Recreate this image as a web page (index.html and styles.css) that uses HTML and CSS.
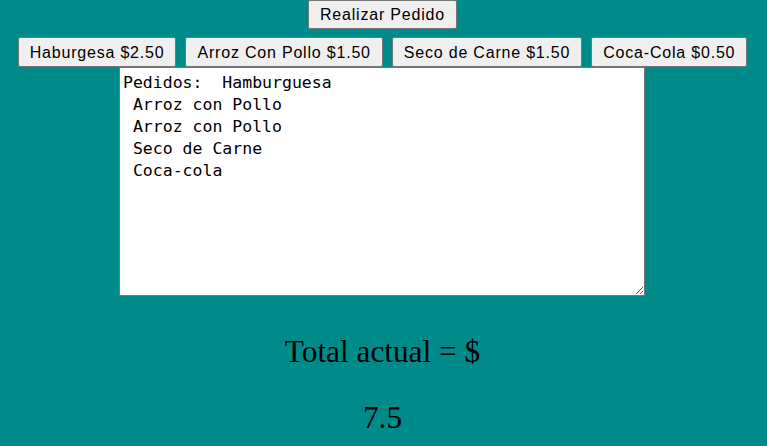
FILE: index.html
```html
<!DOCTYPE html>
<html lang="es">
<head>
<meta charset="utf-8">
<title>Pedidos</title>
<link rel="stylesheet" href="styles.css">
</head>
<body>
<main class="page">
  <div class="row row-top">
    <button class="btn">Realizar Pedido</button>
  </div>
  <div class="row row-menu">
    <button class="btn">Haburgesa $2.50</button>
    <button class="btn">Arroz Con Pollo $1.50</button>
    <button class="btn">Seco de Carne $1.50</button>
    <button class="btn">Coca-Cola $0.50</button>
  </div>
  <textarea class="orders">Pedidos:  Hamburguesa
 Arroz con Pollo
 Arroz con Pollo
 Seco de Carne
 Coca-cola</textarea>
  <p class="total">Total actual = $</p>
  <p class="amount">7.5</p>
</main>
</body>
</html>
```

FILE: styles.css
```css
html, body {
  margin: 0;
  padding: 0;
  background: #008b8b;
}
.page {
  display: flex;
  flex-direction: column;
  align-items: center;
  width: 765px;
}
.row {
  display: flex;
  justify-content: center;
  gap: 8px;
}
.row-top {
  height: 29px;
}
.row-menu {
  margin-top: 8px;
  gap: 9px;
}
.btn {
  font-family: "Liberation Sans", Arial, sans-serif;
  font-size: 16px;
  letter-spacing: 0.8px;
  color: #000;
  background: #efefef;
  border: 1px solid #767676;
  border-radius: 2px;
  padding: 0 11px;
  height: 29px;
  line-height: 27px;
}
.row-menu .btn {
  height: 30px;
}
.orders {
  box-sizing: border-box;
  width: 526px;
  height: 229px;
  margin: 0 1px 0 0;
  padding: 4px 3px;
  border: 1px solid #767676;
  background: #fff;
  font-family: "DejaVu Sans Mono", monospace;
  font-size: 16.5px;
  line-height: 22px;
  color: #000;
}
.total {
  margin: 39px 0 0;
  font-family: "Liberation Serif", "Times New Roman", serif;
  font-size: 31.3px;
  line-height: 34px;
}
.amount {
  margin: 32px 0 0;
  font-family: "Liberation Serif", "Times New Roman", serif;
  font-size: 31.3px;
  line-height: 34px;
}
```
